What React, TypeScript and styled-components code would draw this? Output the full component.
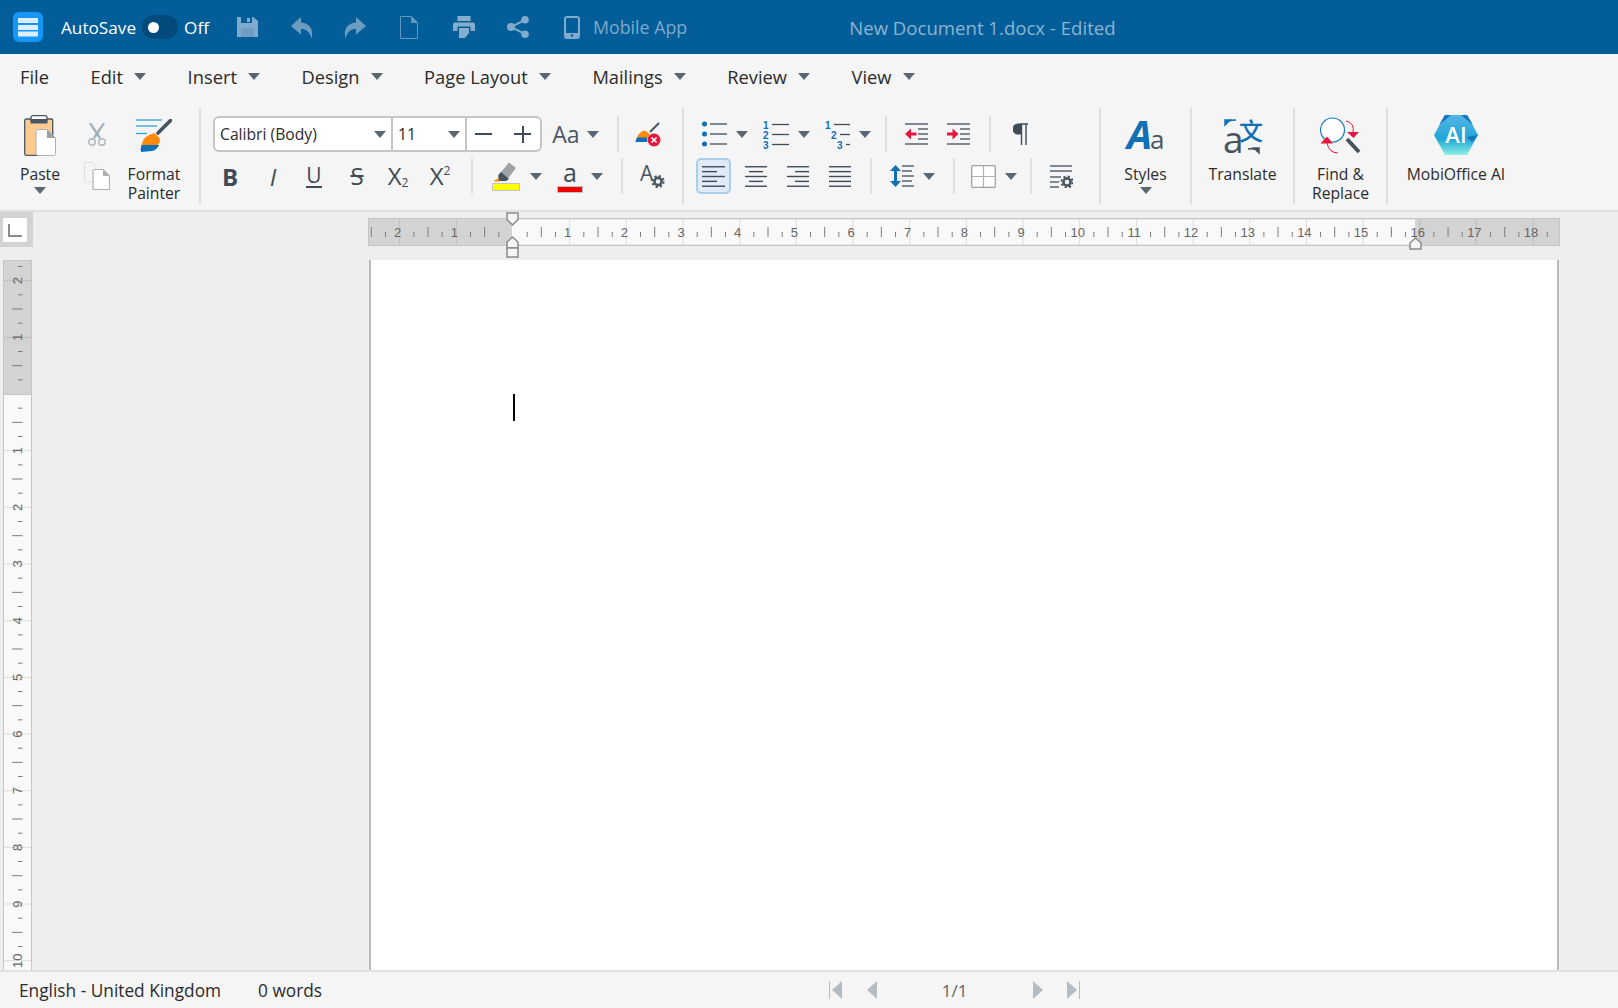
import styled, { createGlobalStyle } from "styled-components";

const UI_FONT = `"Open Sans", "Noto Sans", sans-serif`;
const DARK = "#3f4c58";
const BLUE = "#0f70b7";
const RED = "#e5173f";
const CM = 56.67;

const GlobalStyle = createGlobalStyle`
  html, body { margin: 0; padding: 0; height: 100%; }
  body { font-family: ${UI_FONT}; background: #eeeeee; color: #222; overflow: hidden; }
  #root { height: 100%; }
`;

/* ---------- small drawings ---------- */

const LinesIcon = ({ rows, w = 23, h = 21 }: { rows: [number, number][]; w?: number; h?: number }) => (
  <svg width={w} height={h} viewBox={`0 0 ${w} ${h}`}>
    {rows.map(([a, b], i) => (
      <line key={i} x1={a} x2={b} y1={0.75 + (i * (h - 1.5)) / (rows.length - 1)} y2={0.75 + (i * (h - 1.5)) / (rows.length - 1)} stroke={DARK} strokeWidth="1.4" />
    ))}
  </svg>
);

const Gear = ({ x, y, r = 1 }: { x: number; y: number; r?: number }) => (
  <g transform={`translate(${x} ${y}) scale(${r})`}>
    <circle r="3.6" fill="none" stroke="#4d5963" strokeWidth="2.6" />
    <circle r="5.6" fill="none" stroke="#4d5963" strokeWidth="2" strokeDasharray="2.2 2.2" />
  </g>
);

const LogoIcon = () => (
  <svg width="30" height="30" viewBox="0 0 30 30">
    <rect width="30" height="30" rx="6" fill="#1597f8" />
    <rect x="5" y="6" width="20" height="5" fill="#dceeff" />
    <rect x="5" y="13" width="20" height="5" fill="#dceeff" />
    <rect x="5" y="19.5" width="20" height="5" fill="#dceeff" />
  </svg>
);

const SaveIcon = () => (
  <svg width="21" height="20" viewBox="0 0 21 20">
    <path d="M0 0H16L21 4V20H0Z" fill="#7faccc" />
    <rect x="4" y="0" width="11" height="6" fill="#025d98" />
    <rect x="10" y="1" width="3" height="4" fill="#7faccc" />
    <rect x="4" y="11" width="13" height="9" fill="#6e9fc3" />
  </svg>
);

const UndoIcon = ({ flip }: { flip?: boolean }) => (
  <svg width="22" height="23" viewBox="0 0 22 23" style={flip ? { transform: "scaleX(-1)" } : undefined}>
    <path d="M10 1L0 10L10 18.5V13C15 13 18.5 15.5 20.5 22.5C23 12.5 18 7 10 6.5Z" fill="#6a9cc0" />
  </svg>
);

const DocIcon = () => (
  <svg width="18" height="23" viewBox="0 0 18 23">
    <path d="M.5.5H11.5L17.5 6.5V22.5H.5ZM11.5.5V6.5H17.5" fill="none" stroke="#5f97bf" />
    <path d="M11.5.5L17.5 6.5H11.5Z" fill="#5f97bf" />
  </svg>
);

const PrintIcon = () => (
  <svg width="22" height="22" viewBox="0 0 22 22">
    <rect x="4.5" y="0" width="13" height="5" fill="#85aecd" />
    <path d="M2 6.5H20A2 2 0 0 1 22 8.500V15H17.500V10.500H4.500V15H0V8.500A2 2 0 0 1 2 6.500Z" fill="#85aecd" />
    <path d="M6 12H16V17L12 22H6Z" fill="#85aecd" />
  </svg>
);

const ShareIcon = () => (
  <svg width="22" height="22" viewBox="0 0 22 22">
    <g fill="#7faccc" stroke="none">
      <circle cx="4" cy="11" r="4" />
      <circle cx="18" cy="3.800" r="3.800" />
      <circle cx="18" cy="18.200" r="3.800" />
    </g>
    <path d="M18 3.800L4 11L18 18.200" fill="none" stroke="#7faccc" strokeWidth="2" />
  </svg>
);

const PhoneIcon = () => (
  <svg width="16" height="23" viewBox="0 0 16 23">
    <rect x="1" y="1" width="14" height="21" rx="2" fill="none" stroke="#7faccc" strokeWidth="2" />
    <rect x="1" y="17" width="14" height="5" fill="#7faccc" />
    <circle cx="8" cy="19.500" r="1.200" fill="#025d98" />
  </svg>
);

const PasteIcon = () => (
  <svg width="32" height="41" viewBox="0 0 32 41">
    <rect x="0.700" y="4" width="28" height="36.300" rx="1.500" fill="#fdcb90" stroke="#4a5762" strokeWidth="1.300" />
    <rect x="7" y="0.700" width="16" height="6" rx="2" fill="#fff" stroke="#4a5762" strokeWidth="1.300" />
    <rect x="6.500" y="4" width="17" height="4.500" fill="#4a5762" />
    <path d="M14 14.500H23L31.500 23V38.500Q31.500 40.500 29.500 40.500H14Q12 40.500 12 38.500V16.500Q12 14.500 14 14.500Z" fill="#fff" stroke="#a9b1b7" />
    <path d="M23 14.500L31.500 23H23Z" fill="#9b9fa3" />
  </svg>
);

const CutIcon = () => (
  <svg width="18" height="23" viewBox="0 0 18 23">
    <path d="M2 0L12 15M16 0L6 15" stroke="#aab3ba" strokeWidth="2.400" fill="none" />
    <circle cx="4" cy="19" r="3.200" fill="none" stroke="#aab3ba" strokeWidth="1.400" />
    <circle cx="14" cy="19" r="3.200" fill="none" stroke="#aab3ba" strokeWidth="1.400" />
    <circle cx="9" cy="11" r="1.500" fill="#79b6d8" />
  </svg>
);

const CopyIcon = () => (
  <svg width="26" height="28" viewBox="0 0 26 28">
    <path d="M1.500.5H9L12 3.500V20H1.500Q.5 20 .5 19V1.500Q.5.5 1.500.5Z" fill="#f5f5f5" stroke="#dcdfe1" />
    <path d="M10 7.500H19L25.500 14V26.500Q25.500 27.500 24.500 27.500H10Q9 27.500 9 26.500V8.500Q9 7.500 10 7.500Z" fill="#fff" stroke="#aab2b8" strokeWidth="1.200" />
    <path d="M19 7.500L25.500 14H19Z" fill="#aab2b8" />
  </svg>
);

const PainterIcon = () => (
  <svg width="36" height="33" viewBox="0 0 36 33">
    <g stroke="#27a5dd" strokeWidth="1.300">
      <line x1="0" x2="26" y1="1" y2="1" />
      <line x1="0" x2="21" y1="7" y2="7" />
      <line x1="0" x2="11" y1="14.500" y2="14.500" />
    </g>
    <path d="M35 1L22 14" stroke="#46535f" strokeWidth="3.600" strokeLinecap="round" />
    <path d="M18.500 14L23.500 19Q25 25 20 27H5.500Q6 17 18.500 14Z" fill="#ff8a0c" />
    <path d="M5.500 26H23Q21 31 16 32L5 33Q4 30 5.500 26Z" fill="#0f6fb8" />
  </svg>
);

const ClearIcon = () => (
  <svg width="26" height="25" viewBox="0 0 26 25">
    <path d="M24 1L15 10" stroke="#46535f" strokeWidth="2" />
    <path d="M10 8.500L14 11.500Q15 15 11 16.500H2Q3 10 10 8.500Z" fill="#ff8a0c" />
    <path d="M2 15.500H12V20H0.500Q0.500 18 2 15.500Z" fill="#0f6fb8" />
    <circle cx="19" cy="18" r="6.500" fill={RED} />
    <path d="M16.500 15.500L21.500 20.500M21.500 15.500L16.500 20.500" stroke="#fff" strokeWidth="1.700" />
  </svg>
);

const HighlightIcon = () => (
  <svg width="28" height="29" viewBox="0 0 28 29">
    <path d="M17 0.500L24 6L14 19H6.500V13Z" fill="#a0a2a4" />
    <path d="M9 10L17 17L14 19H6.500V13Z" fill="#46535f" />
    <path d="M2.500 18L6.500 16.500L7.500 19.500H2.500Z" fill="#ff8a0c" />
    <rect x="0.500" y="21.500" width="27" height="7" fill="#ffff00" stroke="#c3c3c3" />
  </svg>
);

const ColorBar = styled.span`
  display: block;
  width: 26px;
  height: 7px;
  background: #ee0000;
  border: 1px solid #c3c3c3;
  box-sizing: border-box;
`;

const BulletIcon = () => (
  <svg width="25" height="26" viewBox="0 0 25 26">
    {[3, 13, 23].map((y) => (
      <g key={y}>
        <circle cx="2.500" cy={y} r="2.500" fill={BLUE} />
        <line x1="8" x2="25" y1={y} y2={y} stroke={DARK} strokeWidth="1.300" />
      </g>
    ))}
  </svg>
);

const NumberIcon = () => (
  <svg width="26" height="27" viewBox="0 0 26 27" overflow="visible">
    {["1", "2", "3"].map((d, i) => (
      <g key={d}>
        <text x="0" y={7.500 + i * 10} fontFamily="Liberation Sans" fontSize="10" fontWeight="700" fill={BLUE}>{d}</text>
        <line x1="9" x2="26" y1={3.500 + i * 10} y2={3.500 + i * 10} stroke={DARK} strokeWidth="1.300" />
      </g>
    ))}
  </svg>
);

const MultiIcon = () => (
  <svg width="26" height="27" viewBox="0 0 26 27" overflow="visible">
    {["1", "2", "3"].map((d, i) => (
      <g key={d}>
        <text x={i * 6} y={7.500 + i * 10} fontFamily="Liberation Sans" fontSize="10" fontWeight="700" fill={BLUE}>{d}</text>
        <line x1={9 + i * 6} x2="25" y1={3.500 + i * 10} y2={3.500 + i * 10} stroke={DARK} strokeWidth="1.300" />
      </g>
    ))}
  </svg>
);

const IndentIcon = ({ out }: { out?: boolean }) => (
  <svg width="23" height="22" viewBox="0 0 23 22">
    <g stroke={DARK} strokeWidth="1.300">
      <line x1="0" x2="23" y1="1" y2="1" />
      <line x1="13" x2="23" y1="6" y2="6" />
      <line x1="13" x2="23" y1="11" y2="11" />
      <line x1="13" x2="23" y1="16" y2="16" />
      <line x1="0" x2="23" y1="21" y2="21" />
    </g>
    {out ? (
      <path d="M0 11L6 5.500V9.500H11.500V12.500H6V16.500Z" fill={RED} />
    ) : (
      <path d="M11.500 11L5.500 5.500V9.500H0V12.500H5.500V16.500Z" fill={RED} />
    )}
  </svg>
);

const PilcrowIcon = () => (
  <svg width="15" height="22" viewBox="0 0 15 22">
    <path d="M7.500 1H15M8.500 1V22M13 1V22" stroke="#3f4c58" strokeWidth="1.400" fill="none" />
    <path d="M8 0.500H5A5.500 5.500 0 0 0 5 11.500H8Z" fill="#3f4c58" />
  </svg>
);

const SpacingIcon = () => (
  <svg width="24" height="22" viewBox="0 0 24 22">
    <path d="M5.500 0L11 6H7V16H11L5.500 22L0 16H4V6H0Z" fill={BLUE} />
    <g stroke={DARK} strokeWidth="1.300">
      <line x1="12" x2="24" y1="1" y2="1" />
      <line x1="12" x2="22" y1="6" y2="6" />
      <line x1="12" x2="24" y1="11" y2="11" />
      <line x1="12" x2="22" y1="16" y2="16" />
      <line x1="12" x2="24" y1="21" y2="21" />
    </g>
  </svg>
);

const TableIcon = () => (
  <svg width="25" height="23" viewBox="0 0 25 23">
    <rect x="0.700" y="0.700" width="23.600" height="21.600" rx="1" fill="#fff" stroke="#a0a0a0" strokeWidth="1.300" />
    <path d="M12.500 1V22M1 11.500H24" stroke="#b0b0b0" strokeWidth="1.200" />
  </svg>
);

const ParaSettingsIcon = () => (
  <svg width="24" height="23" viewBox="0 0 24 23">
    <g stroke={DARK} strokeWidth="1.300">
      <line x1="1" x2="23" y1="1" y2="1" />
      <line x1="1" x2="23" y1="6" y2="6" />
      <line x1="1" x2="12" y1="12" y2="12" />
      <line x1="1" x2="10" y1="17" y2="17" />
      <line x1="1" x2="10" y1="22" y2="22" />
    </g>
    <Gear x={18} y={17} />
  </svg>
);

const FontSettingsIcon = () => (
  <svg width="24" height="24" viewBox="0 0 24 24" overflow="visible">
    <text x="-1" y="17" fontFamily="Open Sans" fontSize="21" fill="#4a5763">A</text>
    <Gear x={17} y={17.500} />
  </svg>
);

const StylesIcon = () => (
  <svg width="38" height="32" viewBox="0 0 38 32" overflow="visible">
    <text x="0" y="30" fontFamily="Open Sans" fontSize="40" fontWeight="700" fontStyle="italic" fill={BLUE}>A</text>
    <text x="23" y="30" fontFamily="Open Sans" fontSize="26" fill="#4a5763">a</text>
  </svg>
);

const TranslateIcon = () => (
  <svg width="38" height="37" viewBox="0 0 38 37" overflow="visible">
    <text x="-1" y="36" fontFamily="Open Sans" fontSize="37" fill="#46535f">a</text>
    <text x="15" y="23" fontFamily="Noto Sans CJK SC" fontSize="24" fontWeight="500" fill={BLUE}>文</text>
    <path d="M1 8V3H6ZM3 5Q6 2.500 12 3" fill={BLUE} stroke={BLUE} strokeWidth="1.500" />
    <path d="M35 36V31H30ZM33 33Q30 30.500 24 32" fill="#46535f" stroke="#46535f" strokeWidth="1.500" />
  </svg>
);

const FindIcon = () => (
  <svg width="41" height="37" viewBox="0 0 41 37">
    <circle cx="12.500" cy="13" r="12" fill="#fff" stroke="#1a7cc2" strokeWidth="1.200" />
    <path d="M27 22L39 35" stroke="#46535f" strokeWidth="4" />
    <path d="M26 4Q35 6 33 16" fill="none" stroke={RED} strokeWidth="1" />
    <path d="M27 15H39L33.500 21Z" fill={RED} />
    <path d="M18 36Q9 36 7 26" fill="none" stroke={RED} strokeWidth="1" />
    <path d="M0.500 26.500H13L7 19.500Z" fill={RED} />
  </svg>
);

const AiIcon = () => (
  <svg width="44" height="40" viewBox="0 0 44 40">
    <defs>
      <linearGradient id="aiFill" x1="0" y1="0" x2="0" y2="1">
        <stop offset="0" stopColor="#56b5e6" />
        <stop offset="0.600" stopColor="#1fa6d6" />
        <stop offset="1" stopColor="#8cf0e4" />
      </linearGradient>
    </defs>
    <path d="M11 0H33L44 20L33 40H11L0 20Z" fill="url(#aiFill)" />
    <path d="M11 0H17L5 10Z" fill="#1374c0" />
    <path d="M33 0H27L39 10Z" fill="#1374c0" />
    <path d="M44 20L38 27L33 22Z" fill="#1374c0" />
    <text x="22" y="27.500" textAnchor="middle" fontFamily="Open Sans" fontSize="22" fontWeight="600" fill="#fff">AI</text>
  </svg>
);

const PagerIcon = ({ dir, bar }: { dir: "l" | "r"; bar?: boolean }) => (
  <svg width={bar ? 13 : 10} height="18" viewBox={`0 0 ${bar ? 13 : 10} 18`}>
    {dir === "l" ? (
      <g>
        {bar && <line x1="0.500" x2="0.500" y1="0" y2="18" stroke="#b4bbc1" />}
        <path d={bar ? "M13 0V18L3 9Z" : "M10 0V18L0 9Z"} fill="#b4bbc1" />
      </g>
    ) : (
      <g>
        <path d="M0 0V18L10 9Z" fill="#b4bbc1" />
        {bar && <line x1="12.500" x2="12.500" y1="0" y2="18" stroke="#b4bbc1" />}
      </g>
    )}
  </svg>
);

const HRuler = () => {
  const ox = 145;
  const steps: number[] = [];
  for (let i = -10; i <= 74; i++) steps.push(i);
  return (
    <svg width="1192" height="28" viewBox="0 0 1192 28">
      <rect x="0.500" y="0.500" width="1191" height="27" fill="#d3d3d3" stroke="#c6c6c6" />
      <rect x="144" y="1.500" width="903" height="25" fill="#f9f9f9" />
      {steps.map((s) => {
        const x = ox + (s * CM) / 4;
        if (s % 4 === 0) {
          const n = Math.abs(s / 4);
          const inside = x > 144 && x < 1047;
          return (
            <g key={s}>
              {n !== 0 && <line x1={x} x2={x} y1="1" y2="27" stroke={inside ? "#dcdcdc" : "#bebebe"} />}
              {n !== 0 && (
                <text x={x - 2} y="18.700" textAnchor="middle" fontFamily="Liberation Sans" fontSize="13" fill="#666">
                  {n}
                </text>
              )}
            </g>
          );
        }
        const long = Math.abs(s % 4) === 2;
        return <line key={s} x1={x} x2={x} y1={long ? 9 : 14} y2="19" stroke="#7d7d7d" />;
      })}
    </svg>
  );
};

const VRuler = () => {
  const oy = 134;
  const steps: number[] = [];
  for (let i = -9; i <= 41; i++) steps.push(i);
  return (
    <svg width="29" height="710" viewBox="0 0 29 710">
      <rect x="0.500" y="0.500" width="28" height="720" fill="#f9f9f9" stroke="#c6c6c6" />
      <rect x="0.500" y="0.500" width="28" height="134" fill="#d3d3d3" stroke="#c6c6c6" />
      {steps.map((s) => {
        const y = oy + (s * CM) / 4;
        if (s % 4 === 0) {
          const n = Math.abs(s / 4);
          if (n === 0) return null;
          return (
            <g key={s}>
              <line x1="1" x2="28" y1={y} y2={y} stroke={s < 0 ? "#bebebe" : "#dcdcdc"} />
              <text transform={`translate(14 ${y}) rotate(-90)`} y="4.500" textAnchor="middle" fontFamily="Liberation Sans" fontSize="13" fill="#666">
                {n}
              </text>
            </g>
          );
        }
        const long = Math.abs(s % 4) === 2;
        return <line key={s} x1={long ? 9 : 15} x2="19.500" y1={y} y2={y} stroke="#7d7d7d" />;
      })}
    </svg>
  );
};

const Marker = ({ variant }: { variant: "down" | "up" | "upBox" }) => {
  if (variant === "down") {
    return (
      <svg width="13" height="14" viewBox="0 0 13 14">
        <path d="M1 1H12V7.500L6.500 13L1 7.500Z" fill="#f5f5f5" stroke="#8a8a8a" strokeWidth="1.500" />
      </svg>
    );
  }
  return (
    <svg width="13" height={variant === "upBox" ? 22 : 13} viewBox={`0 0 13 ${variant === "upBox" ? 22 : 13}`}>
      <path d="M1 12V6L6.500 1L12 6V12Z" fill="#f5f5f5" stroke="#8a8a8a" strokeWidth="1.500" />
      {variant === "upBox" && <rect x="1" y="12" width="11" height="9" fill="#f5f5f5" stroke="#8a8a8a" strokeWidth="1.500" />}
    </svg>
  );
};

/* ---------- page ---------- */

const App = () => {
  return (
    <>
      <GlobalStyle />
      <Screen>
        <TitleBar>
          <LogoIcon />
          <BarText $ml={18}>AutoSave</BarText>
          <Toggle>
            <Knob />
          </Toggle>
          <BarText $ml={6}>Off</BarText>
          <BarIcon $ml={28}><SaveIcon /></BarIcon>
          <BarIcon $ml={33}><UndoIcon /></BarIcon>
          <BarIcon $ml={31}><UndoIcon flip /></BarIcon>
          <BarIcon $ml={34}><DocIcon /></BarIcon>
          <BarIcon $ml={35}><PrintIcon /></BarIcon>
          <BarIcon $ml={32}><ShareIcon /></BarIcon>
          <BarIcon $ml={35}><PhoneIcon /></BarIcon>
          <MobileLabel>Mobile App</MobileLabel>
          <DocTitle>New Document 1.docx - Edited</DocTitle>
        </TitleBar>

        <MenuBar>
          <MenuItem>File</MenuItem>
          {["Edit", "Insert", "Design", "Page Layout", "Mailings", "Review", "View"].map((m) => (
            <MenuItem key={m}>
              {m}
              <Caret $ml={11} />
            </MenuItem>
          ))}
        </MenuBar>

        <Ribbon>
          <ClipboardGroup>
            <LargeButton $w={56}>
              <LargeIcon><PasteIcon /></LargeIcon>
              <LargeLabel>Paste</LargeLabel>
              <Caret />
            </LargeButton>
            <CutCopy>
              <CutIcon />
              <CopyIcon />
            </CutCopy>
            <LargeButton $w={64}>
              <LargeIcon><PainterIcon /></LargeIcon>
              <LargeLabel>Format Painter</LargeLabel>
            </LargeButton>
          </ClipboardGroup>
          <GroupSep />

          <ToolGroup $w={481}>
            <ToolRow>
              <FontCombo>
                <ComboPart $w={178}>
                  Calibri (Body)
                  <Caret />
                </ComboPart>
                <ComboPart $w={74}>
                  11
                  <Caret />
                </ComboPart>
                <Stepper>
                  <StepMark />
                  <StepMark $plus />
                </Stepper>
              </FontCombo>
              <Tool $w={30} $ml={9}><CaseText>Aa</CaseText></Tool>
              <Caret $ml={6} />
              <RowSep $ml={18} />
              <Tool $w={26} $ml={16}><ClearIcon /></Tool>
            </ToolRow>
            <ToolRow>
              <Tool $w={26} $ml={4}><BoldGlyph>B</BoldGlyph></Tool>
              <Tool $w={26} $ml={17}><ItalicGlyph>I</ItalicGlyph></Tool>
              <Tool $w={26} $ml={15}><UnderGlyph>U</UnderGlyph></Tool>
              <Tool $w={26} $ml={17}><StrikeGlyph>S</StrikeGlyph></Tool>
              <Tool $w={26} $ml={15}><ScriptGlyph>X<LowMark>2</LowMark></ScriptGlyph></Tool>
              <Tool $w={26} $ml={16}><ScriptGlyph>X<HighMark>2</HighMark></ScriptGlyph></Tool>
              <RowSep $ml={18} />
              <Tool $w={28} $ml={19}><HighlightIcon /></Tool>
              <Caret $ml={10} />
              <ColorTool $ml={15}>
                <ColorLetter>a</ColorLetter>
                <ColorBar />
              </ColorTool>
              <Caret $ml={8} />
              <RowSep $ml={18} />
              <Tool $w={24} $ml={18}><FontSettingsIcon /></Tool>
            </ToolRow>
          </ToolGroup>
          <GroupSep />

          <ToolGroup $w={415}>
            <ToolRow>
              <Tool $w={25} $ml={6}><BulletIcon /></Tool>
              <Caret $ml={9} />
              <Tool $w={26} $ml={15}><NumberIcon /></Tool>
              <Caret $ml={9} />
              <Tool $w={26} $ml={15}><MultiIcon /></Tool>
              <Caret $ml={8} />
              <RowSep $ml={14} />
              <Tool $w={23} $ml={18}><IndentIcon out /></Tool>
              <Tool $w={23} $ml={19}><IndentIcon /></Tool>
              <RowSep $ml={19} />
              <Tool $w={15} $ml={22}><PilcrowIcon /></Tool>
            </ToolRow>
            <ToolRow>
              <AlignActive>
                <LinesIcon rows={[[0, 23], [0, 15], [0, 23], [0, 15], [0, 23]]} />
              </AlignActive>
              <Tool $w={22} $ml={14}><LinesIcon w={22} rows={[[0, 22], [4, 18], [0, 22], [4, 18], [0, 22]]} /></Tool>
              <Tool $w={22} $ml={20}><LinesIcon w={22} rows={[[0, 22], [8, 22], [0, 22], [8, 22], [0, 22]]} /></Tool>
              <Tool $w={22} $ml={20}><LinesIcon w={22} rows={[[0, 22], [0, 22], [0, 22], [0, 22], [0, 22]]} /></Tool>
              <RowSep $ml={19} />
              <Tool $w={24} $ml={18}><SpacingIcon /></Tool>
              <Caret $ml={9} />
              <RowSep $ml={18} />
              <Tool $w={25} $ml={16}><TableIcon /></Tool>
              <Caret $ml={9} />
              <RowSep $ml={13} />
              <Tool $w={24} $ml={17}><ParaSettingsIcon /></Tool>
            </ToolRow>
          </ToolGroup>
          <GroupSep />

          <LargeButton $w={89}>
            <LargeIcon><StylesIcon /></LargeIcon>
            <LargeLabel>Styles</LargeLabel>
            <Caret />
          </LargeButton>
          <GroupSep />
          <LargeButton $w={101}>
            <LargeIcon><TranslateIcon /></LargeIcon>
            <LargeLabel>Translate</LargeLabel>
          </LargeButton>
          <GroupSep />
          <LargeButton $w={91}>
            <LargeIcon><FindIcon /></LargeIcon>
            <LargeLabel>Find &amp; Replace</LargeLabel>
          </LargeButton>
          <GroupSep />
          <LargeButton $w={136}>
            <LargeIcon><AiIcon /></LargeIcon>
            <LargeLabel>MobiOffice AI</LargeLabel>
          </LargeButton>
        </Ribbon>

        <Workspace>
          <CornerCell>
            <TabStop>
              <TabGlyph />
            </TabStop>
          </CornerCell>
          <RulerCell>
            <HRuler />
            <MarkerSlot $x={138} $y={0}><Marker variant="down" /></MarkerSlot>
            <MarkerSlot $x={138} $y={24}><Marker variant="upBox" /></MarkerSlot>
            <MarkerSlot $x={1041} $y={25}><Marker variant="up" /></MarkerSlot>
          </RulerCell>
          <VRulerCell>
            <VRuler />
          </VRulerCell>
          <Page>
            <TextCursor />
          </Page>
        </Workspace>

        <StatusBar>
          <StatusText>English - United Kingdom</StatusText>
          <StatusText $ml={37}>0 words</StatusText>
          <Pager>
            <PagerIcon dir="l" bar />
            <PagerIcon dir="l" />
            <PageCount>1/1</PageCount>
            <PagerIcon dir="r" />
            <PagerIcon dir="r" bar />
          </Pager>
        </StatusBar>
      </Screen>
    </>
  );
};

export default App;

const Screen = styled.div`
  width: 1618px;
  height: 1008px;
  display: flex;
  flex-direction: column;
  overflow: hidden;
`;

const TitleBar = styled.header`
  flex: none;
  height: 54px;
  padding-left: 13px;
  display: flex;
  align-items: center;
  background: #025d98;
  box-sizing: border-box;
`;

const BarText = styled.span<{ $ml: number }>`
  margin-left: ${(p) => p.$ml}px;
  font-size: 17.2px;
  color: #ffffff;
`;

const Toggle = styled.span`
  margin-left: 6px;
  width: 36px;
  height: 24px;
  border-radius: 12px;
  background: #014a7b;
  display: flex;
  align-items: center;
  padding-left: 6px;
  box-sizing: border-box;
`;

const Knob = styled.span`
  width: 11px;
  height: 11px;
  border-radius: 50%;
  background: #ffffff;
`;

const BarIcon = styled.span<{ $ml: number }>`
  margin-left: ${(p) => p.$ml}px;
  display: flex;
`;

const MobileLabel = styled.span`
  margin-left: 13px;
  font-size: 17.8px;
  color: #7daaca;
`;

const DocTitle = styled.span`
  margin-left: 162px;
  font-size: 18.6px;
  color: #8db4d1;
`;

const MenuBar = styled.nav`
  flex: none;
  height: 46px;
  padding: 0 0 1px 20px;
  display: flex;
  align-items: center;
  gap: 41.6px;
  background: #f5f5f5;
  box-sizing: border-box;
`;

const MenuItem = styled.span`
  display: flex;
  align-items: center;
  font-size: 18.3px;
  color: #2b2b2b;
`;

const Caret = styled.span<{ $ml?: number }>`
  flex: none;
  display: inline-block;
  margin-left: ${(p) => p.$ml ?? 0}px;
  width: 0;
  height: 0;
  border-left: 6px solid transparent;
  border-right: 6px solid transparent;
  border-top: 7px solid #5a6670;
`;

const Ribbon = styled.section`
  flex: none;
  height: 112px;
  padding: 8px 0 6px;
  display: flex;
  background: #f5f5f5;
  border-bottom: 2px solid #e0e0e0;
  box-sizing: border-box;
`;

const GroupSep = styled.span`
  flex: none;
  width: 2px;
  background: #e0e0e0;
`;

const ClipboardGroup = styled.div`
  flex: none;
  width: 199px;
  padding-left: 12px;
  display: flex;
  gap: 9px;
  box-sizing: border-box;
`;

const LargeButton = styled.div<{ $w: number }>`
  flex: none;
  width: ${(p) => p.$w}px;
  display: flex;
  flex-direction: column;
  align-items: center;
`;

const LargeIcon = styled.div`
  flex: none;
  height: 54px;
  display: flex;
  align-items: center;
  justify-content: center;
`;

const LargeLabel = styled.div`
  margin: 3px 0 3px;
  font-size: 15.7px;
  line-height: 19px;
  text-align: center;
  color: #2b2b2b;
`;

const CutCopy = styled.div`
  flex: none;
  width: 36px;
  padding: 15px 0 0 4px;
  display: flex;
  flex-direction: column;
  align-items: center;
  gap: 16px;
  box-sizing: border-box;
`;

const ToolGroup = styled.div<{ $w: number }>`
  flex: none;
  width: ${(p) => p.$w}px;
  padding: 8px 0 0 12px;
  display: flex;
  flex-direction: column;
  gap: 6px;
  box-sizing: border-box;
`;

const ToolRow = styled.div`
  height: 36px;
  display: flex;
  align-items: center;
`;

const Tool = styled.div<{ $w: number; $ml?: number }>`
  flex: none;
  width: ${(p) => p.$w}px;
  margin-left: ${(p) => p.$ml ?? 0}px;
  display: flex;
  align-items: center;
  justify-content: center;
`;

const RowSep = styled.span<{ $ml: number }>`
  flex: none;
  width: 2px;
  height: 36px;
  margin-left: ${(p) => p.$ml}px;
  background: #e0e0e0;
`;

const FontCombo = styled.div`
  flex: none;
  width: 329px;
  height: 36px;
  display: flex;
  background: #ffffff;
  border: 2px solid #c6c6c6;
  border-radius: 6px;
  box-sizing: border-box;
`;

const ComboPart = styled.div<{ $w: number }>`
  flex: none;
  width: ${(p) => p.$w}px;
  padding: 0 5px 0 5px;
  display: flex;
  align-items: center;
  justify-content: space-between;
  border-right: 2px solid #c6c6c6;
  font-size: 15.7px;
  color: #2b2b2b;
  box-sizing: border-box;
`;

const Stepper = styled.div`
  flex: 1;
  padding: 0 9px 0 8px;
  display: flex;
  align-items: center;
  justify-content: space-between;
`;

const StepMark = styled.span<{ $plus?: boolean }>`
  position: relative;
  width: 17px;
  height: 2px;
  background: ${DARK};
  &::after {
    content: "";
    display: ${(p) => (p.$plus ? "block" : "none")};
    position: absolute;
    left: 7.5px;
    top: -7.5px;
    width: 2px;
    height: 17px;
    background: ${DARK};
  }
`;

const CaseText = styled.span`
  font-size: 23px;
  color: #4a5763;
`;

const BoldGlyph = styled.span`
  font-size: 24px;
  font-weight: 700;
  color: ${DARK};
`;

const ItalicGlyph = styled.span`
  font-size: 24px;
  font-style: italic;
  color: ${DARK};
`;

const UnderGlyph = styled.span`
  font-size: 21px;
  line-height: 22px;
  color: ${DARK};
  border-bottom: 2px solid ${DARK};
`;

const StrikeGlyph = styled.span`
  font-size: 24px;
  line-height: 26px;
  color: ${DARK};
  text-decoration: line-through;
  text-decoration-thickness: 1.5px;
`;

const ScriptGlyph = styled.span`
  display: flex;
  font-size: 24px;
  line-height: 26px;
  color: ${DARK};
`;

const LowMark = styled.span`
  font-size: 12px;
  line-height: 12px;
  margin-top: 14px;
`;

const HighMark = styled.span`
  font-size: 12px;
  line-height: 12px;
  margin-top: 2px;
`;

const ColorTool = styled.div<{ $ml: number }>`
  flex: none;
  width: 26px;
  margin-left: ${(p) => p.$ml}px;
  display: flex;
  flex-direction: column;
  align-items: center;
`;

const ColorLetter = styled.span`
  font-size: 25px;
  line-height: 27px;
  color: ${DARK};
`;

const AlignActive = styled.div`
  flex: none;
  width: 35px;
  height: 36px;
  display: flex;
  align-items: center;
  justify-content: center;
  background: #dfecf8;
  border: 2px solid #a9cfe8;
  border-radius: 5px;
  box-sizing: border-box;
`;

const Workspace = styled.main`
  flex: 1;
  min-height: 0;
  display: grid;
  grid-template-columns: 368px 1192px 1fr;
  grid-template-rows: 48px 1fr;
  background: #eeeeee;
`;

const CornerCell = styled.div`
  width: 33px;
  height: 35px;
  padding: 6px 6px 5px 3px;
  background: #d3d3d3;
  box-sizing: border-box;
`;

const TabStop = styled.div`
  width: 24px;
  height: 24px;
  padding: 6px 0 0 5px;
  background: #ffffff;
  box-sizing: border-box;
`;

const TabGlyph = styled.div`
  width: 14px;
  height: 13px;
  border-left: 2px solid #8a8a8a;
  border-bottom: 2px solid #8a8a8a;
  box-sizing: border-box;
`;

const RulerCell = styled.div`
  position: relative;
  padding-top: 6px;
  svg {
    display: block;
  }
`;

const MarkerSlot = styled.div<{ $x: number; $y: number }>`
  position: absolute;
  left: ${(p) => p.$x}px;
  top: ${(p) => p.$y}px;
`;

const VRulerCell = styled.div`
  grid-column: 1;
  grid-row: 2;
  min-height: 0;
  overflow: hidden;
  padding-left: 3px;
  svg {
    display: block;
  }
`;

const Page = styled.div`
  grid-column: 2;
  grid-row: 2;
  padding: 134px 0 0 142px;
  margin: 0 1px;
  background: #ffffff;
  border-left: 2px solid #bcbcbc;
  border-right: 2px solid #bcbcbc;
  box-sizing: border-box;
`;

const TextCursor = styled.div`
  width: 2px;
  height: 27px;
  background: #000000;
`;

const StatusBar = styled.footer`
  flex: none;
  height: 38px;
  padding-left: 19px;
  display: flex;
  align-items: center;
  background: #f5f5f5;
  border-top: 2px solid #e2e2e2;
  box-sizing: border-box;
`;

const StatusText = styled.span<{ $ml?: number }>`
  margin-left: ${(p) => p.$ml ?? 0}px;
  font-size: 17.3px;
  color: #2b2b2b;
`;

const Pager = styled.div`
  margin-left: 507px;
  display: flex;
  align-items: center;
  gap: 24.5px;
`;

const PageCount = styled.span`
  width: 107px;
  text-align: center;
  font-size: 17px;
  color: #666666;
`;
